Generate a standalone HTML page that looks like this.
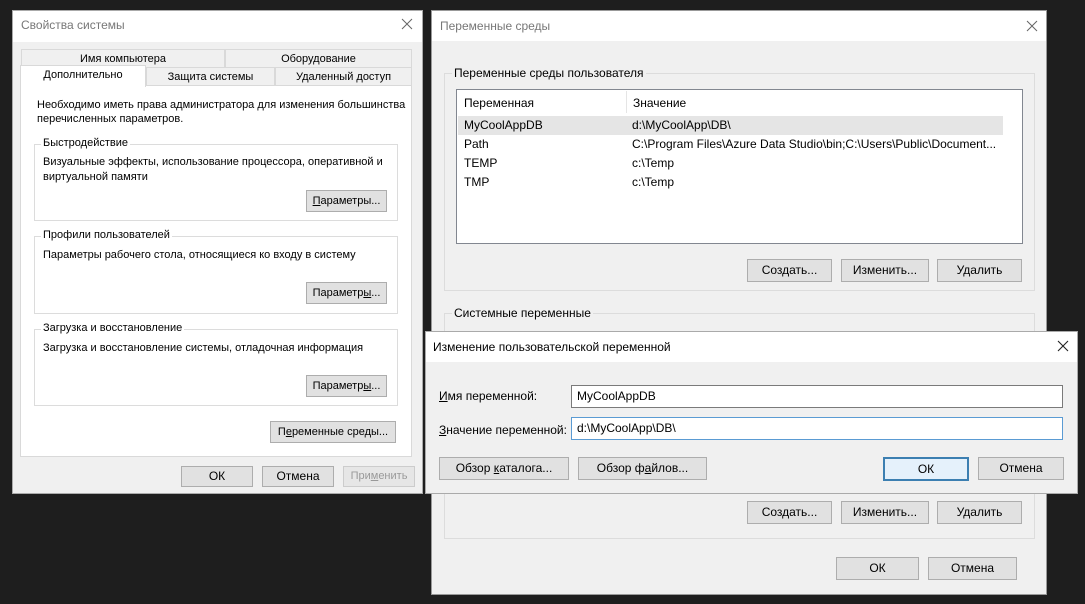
<!DOCTYPE html>
<html><head><meta charset="utf-8"><style>
*{box-sizing:border-box;margin:0;padding:0}
body{width:1085px;height:604px;background:#1e1e1e;position:relative;overflow:hidden;font-family:"Liberation Sans",sans-serif;font-size:12px;color:#000}
.a{position:absolute;white-space:nowrap}
.win{position:absolute;background:#f0f0f0;border:1px solid #888}
.w1{font-size:11px}
.tb{position:absolute;left:0;right:0;top:0;background:#fff}
.btn{position:absolute;background:#e1e1e1;border:1px solid #adadad;text-align:center}
.gb{position:absolute;border:1px solid #dcdcdc}
.gl{position:absolute;top:-8px;left:7px;background:inherit;padding:0 2px}
.in{position:absolute;background:#fff;border:1px solid #7a7a7a;padding-left:5px}
u{text-decoration:underline}
</style></head><body>

<!-- Window 1 -->
<div class="win w1" style="left:12px;top:10px;width:411px;height:484px;border-color:#aaa">
 <div class="tb" style="height:31px"></div>
 <div class="a" style="left:8px;top:7px;color:#777;font-size:12px">Свойства системы</div>
 <svg class="a" style="left:388px;top:7px" width="12" height="12"><path d="M1 1L11 11M11 1L1 11" stroke="#666" stroke-width="1"/></svg>
 <div class="a" style="left:8px;top:38px;width:204px;height:19px;border:1px solid #d9d9d9;background:#f0f0f0;text-align:center;line-height:18px">Имя компьютера</div>
 <div class="a" style="left:212px;top:38px;width:187px;height:19px;border:1px solid #d9d9d9;background:#f0f0f0;text-align:center;line-height:18px">Оборудование</div>
 <div class="a" style="left:7px;top:74px;width:392px;height:372px;border:1px solid #d9d9d9;background:#fff"></div>
 <div class="a" style="left:133px;top:56px;width:129px;height:19px;border:1px solid #d9d9d9;background:#f0f0f0;text-align:center;line-height:19px">Защита системы</div>
 <div class="a" style="left:262px;top:56px;width:137px;height:19px;border:1px solid #d9d9d9;background:#f0f0f0;text-align:center;line-height:19px">Удаленный доступ</div>
 <div class="a" style="left:7px;top:54px;width:126px;height:22px;border:1px solid #d9d9d9;border-bottom:none;background:#fff;text-align:center;line-height:18px">Дополнительно</div>
 <div class="a" style="left:24px;top:87px;line-height:14px">Необходимо иметь права администратора для изменения большинства<br>перечисленных параметров.</div>
 <div class="gb" style="left:21px;top:133px;width:364px;height:77px;background:#fff"><div class="gl" style="left:6px">Быстродействие</div></div>
 <div class="a" style="left:30px;top:144px;line-height:15px">Визуальные эффекты, использование процессора, оперативной и<br>виртуальной памяти</div>
 <div class="btn" style="left:293px;top:179px;width:81px;height:22px;line-height:20px"><u>П</u>араметры...</div>
 <div class="gb" style="left:21px;top:225px;width:364px;height:78px;background:#fff"><div class="gl" style="left:6px">Профили пользователей</div></div>
 <div class="a" style="left:30px;top:238px">Параметры рабочего стола, относящиеся ко входу в систему</div>
 <div class="btn" style="left:293px;top:271px;width:81px;height:22px;line-height:20px">Параметр<u>ы</u>...</div>
 <div class="gb" style="left:21px;top:318px;width:364px;height:77px;background:#fff"><div class="gl" style="left:6px">Загрузка и восстановление</div></div>
 <div class="a" style="left:30px;top:331px">Загрузка и восстановление системы, отладочная информация</div>
 <div class="btn" style="left:293px;top:364px;width:81px;height:22px;line-height:20px">Параметр<u>ы</u>...</div>
 <div class="btn" style="left:257px;top:410px;width:126px;height:22px;line-height:20px">П<u>е</u>ременные среды...</div>
 <div class="btn" style="left:168px;top:455px;width:72px;height:21px;line-height:19px;font-size:12px">ОК</div>
 <div class="btn" style="left:249px;top:455px;width:72px;height:21px;line-height:19px;font-size:12px">Отмена</div>
 <div class="btn" style="left:330px;top:455px;width:72px;height:21px;line-height:19px;color:#999;border-color:#ccc;background:#e6e6e6">При<u>м</u>енить</div>
</div>

<!-- Window 2 -->
<div class="win" style="left:431px;top:10px;width:616px;height:585px;border-color:#999">
 <div class="tb" style="height:30px"></div>
 <div class="a" style="left:8px;top:8px;color:#777">Переменные среды</div>
 <svg class="a" style="left:594px;top:9px" width="12" height="12"><path d="M1 1L11 11M11 1L1 11" stroke="#666" stroke-width="1"/></svg>
 <div class="gb" style="left:12px;top:62px;width:591px;height:218px"><div class="gl" style="background:#f0f0f0">Переменные среды пользователя</div></div>
 <div class="a" style="left:24px;top:78px;width:567px;height:155px;background:#fff;border:1px solid #828790">
  <div class="a" style="left:169px;top:1px;width:1px;height:22px;background:#e5e5e5"></div>
  <div class="a" style="left:7px;top:6px">Переменная</div>
  <div class="a" style="left:176px;top:6px">Значение</div>
  <div class="a" style="left:1px;top:26px;width:545px;height:19px;background:#e5e5e5"></div>
  <div class="a" style="left:7px;top:28px">MyCoolAppDB</div><div class="a" style="left:175px;top:28px">d:\MyCoolApp\DB\</div>
  <div class="a" style="left:7px;top:47px">Path</div><div class="a" style="left:175px;top:47px">C:\Program Files\Azure Data Studio\bin;C:\Users\Public\Document...</div>
  <div class="a" style="left:7px;top:66px">TEMP</div><div class="a" style="left:175px;top:66px">c:\Temp</div>
  <div class="a" style="left:7px;top:85px">TMP</div><div class="a" style="left:175px;top:85px">c:\Temp</div>
 </div>
 <div class="btn" style="left:315px;top:248px;width:85px;height:23px;line-height:21px">Создать...</div>
 <div class="btn" style="left:409px;top:248px;width:88px;height:23px;line-height:21px">Изменить...</div>
 <div class="btn" style="left:505px;top:248px;width:85px;height:23px;line-height:21px">Удалить</div>
 <div class="gb" style="left:12px;top:302px;width:591px;height:226px"><div class="gl" style="background:#f0f0f0">Системные переменные</div></div>
 <div class="btn" style="left:315px;top:490px;width:85px;height:23px;line-height:21px">Создать...</div>
 <div class="btn" style="left:409px;top:490px;width:88px;height:23px;line-height:21px">Изменить...</div>
 <div class="btn" style="left:505px;top:490px;width:85px;height:23px;line-height:21px">Удалить</div>
 <div class="btn" style="left:404px;top:546px;width:83px;height:23px;line-height:21px">ОК</div>
 <div class="btn" style="left:496px;top:546px;width:89px;height:23px;line-height:21px">Отмена</div>
</div>

<!-- Window 3 -->
<div class="win" style="left:425px;top:331px;width:653px;height:163px;border-color:#aaa">
 <div class="tb" style="height:30px"></div>
 <div class="a" style="left:7px;top:8px">Изменение пользовательской переменной</div>
 <svg class="a" style="left:631px;top:8px" width="12" height="12"><path d="M1 1L11 11M11 1L1 11" stroke="#222" stroke-width="1.1"/></svg>
 <div class="a" style="left:13px;top:57px"><u>И</u>мя переменной:</div>
 <div class="in" style="left:145px;top:53px;width:492px;height:23px;line-height:21px">MyCoolAppDB</div>
 <div class="a" style="left:13px;top:91px"><u>З</u>начение переменной:</div>
 <div class="in" style="left:145px;top:85px;width:492px;height:23px;line-height:21px;border-color:#5a9bd3">d:\MyCoolApp\DB\</div>
 <div class="btn" style="left:13px;top:125px;width:130px;height:23px;line-height:21px">Обзор <u>к</u>аталога...</div>
 <div class="btn" style="left:152px;top:125px;width:129px;height:23px;line-height:21px">Обзор ф<u>а</u>йлов...</div>
 <div class="btn" style="left:457px;top:125px;width:86px;height:24px;line-height:20px;border:2px solid #3c7fb1;background:#e5f1fb">ОК</div>
 <div class="btn" style="left:552px;top:125px;width:86px;height:23px;line-height:21px">Отмена</div>
</div>
</body></html>
